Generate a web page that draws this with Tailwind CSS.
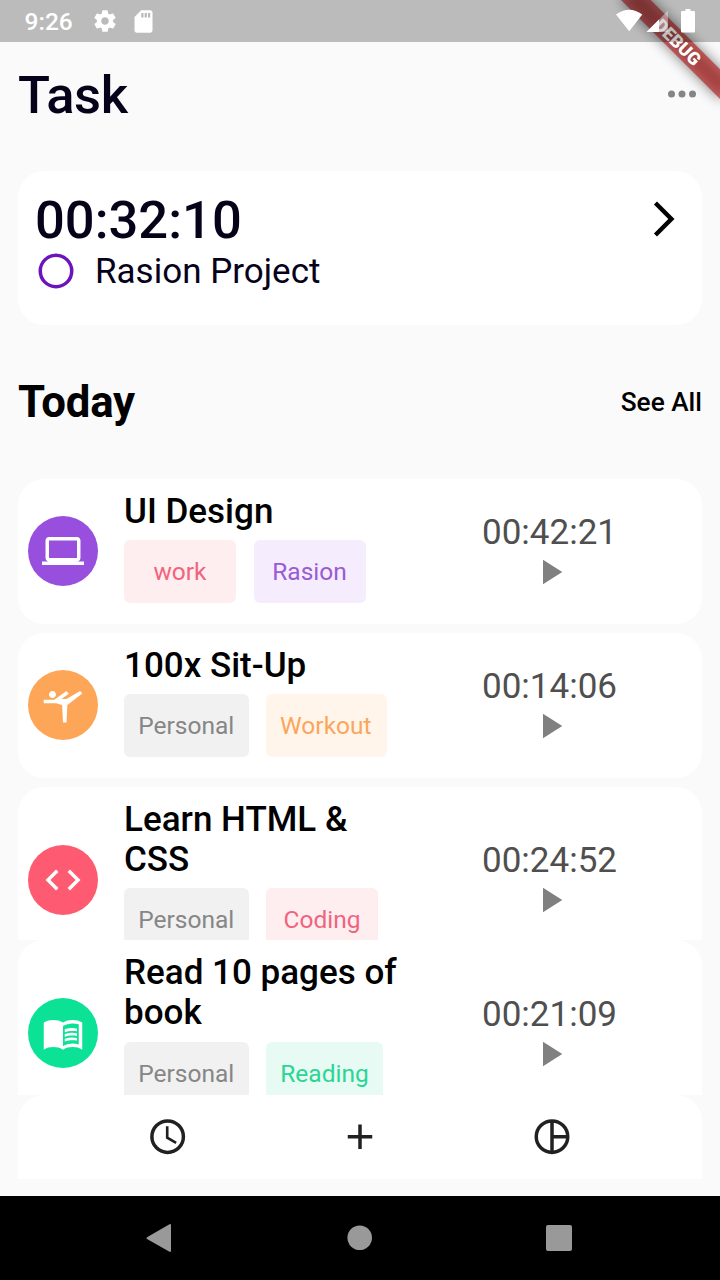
<!DOCTYPE html>
<html lang="en">
<head>
<meta charset="utf-8">
<title>Task</title>
<script src="https://cdn.jsdelivr.net/npm/@tailwindcss/browser@4"></script>
</head>
<body class="w-[720px] h-[1280px] overflow-hidden bg-[#fafafa] font-['Roboto',sans-serif] text-black relative">
<div class="flex flex-col h-[1280px]">
  <div class="h-[42px] shrink-0"></div>

  <main class="h-[1154px] shrink-0 px-[18px] flex flex-col">
    <header class="h-[105px] shrink-0 flex items-center justify-between">
      <h1 class="text-[52.5px] leading-[62px] font-medium text-[#06021a] tracking-[-0.4px]">Task</h1>
      <svg class="size-[42px] -mr-[0.5px] mb-px fill-[#858585]" viewBox="0 0 24 24"><circle cx="6" cy="12" r="2"/><circle cx="12" cy="12" r="2"/><circle cx="18" cy="12" r="2"/></svg>
    </header>

    <section class="mt-[24px] h-[154px] shrink-0 rounded-[26px] bg-white pl-[17px] pr-[17px] pt-[18px]">
      <div class="flex items-center justify-between h-[61px]">
        <span class="text-[52.5px] leading-[61px] pt-[2px] font-medium text-[#06021a]">00:32:10</span>
        <svg class="size-[42px] mb-px fill-black" viewBox="0 0 24 24"><path d="M6.23 20.23 8 22 18 12 8 2 6.23 3.77 14.46 12z"/></svg>
      </div>
      <div class="flex items-center h-[42px] gap-[18px]">
        <svg class="size-[42px]" viewBox="0 0 24 24" fill="none" stroke="#6a14ba" stroke-width="2"><circle cx="12" cy="12" r="9"/></svg>
        <span class="text-[35px] leading-[42px] pt-[2px] text-[#06021a]">Rasion Project</span>
      </div>
    </section>

    <div class="h-[154px] shrink-0 flex items-center justify-between pt-[2px]">
      <h2 class="text-[43.75px] font-bold tracking-[-0.2px]">Today</h2>
      <span class="text-[26.25px] font-medium">See All</span>
    </div>

    <div class="h-[154px] shrink-0 overflow-hidden">
      <article class="h-[145px] rounded-[26px] bg-white flex items-center px-[10px]">
        <div class="size-[70px] mb-px rounded-full bg-[#984fdd] flex items-center justify-center shrink-0">
          <svg class="size-[42px] fill-white" viewBox="0 0 24 24"><path d="M20 18c1.1 0 1.99-.9 1.99-2L22 6c0-1.1-.9-2-2-2H4c-1.1 0-2 .9-2 2v10c0 1.1.9 2 2 2H0v2h24v-2h-4zM4 6h16v10H4V6z"/></svg>
        </div>
        <div class="ml-[26px] w-[298px] h-full pt-[13px]">
          <h3 class="text-[35px] leading-[40px] font-medium">UI Design</h3>
          <div class="mt-[8px] flex gap-[17.5px] text-[24.5px]">
            <span class="h-[63px] min-w-[112px] px-[14px] pt-[2px] rounded-[6px] bg-[#ffeef0] text-[#f0647d] flex items-center justify-center">work</span>
            <span class="h-[63px] min-w-[112px] px-[14px] pt-[2px] rounded-[6px] bg-[#f5edfd] text-[#9a5bd5] flex items-center justify-center">Rasion</span>
          </div>
        </div>
        <div class="ml-[60px] flex flex-col items-center">
          <span class="text-[35px] leading-[41px] w-[136px] relative top-[2px] text-[#4f4f4f]">00:42:21</span>
          <svg class="size-[42px] fill-[#808080]" viewBox="0 0 24 24"><path d="M8 5v14l11-7z"/></svg>
        </div>
      </article>
    </div>

    <div class="h-[154px] shrink-0 overflow-hidden">
      <article class="h-[145px] rounded-[26px] bg-white flex items-center px-[10px]">
        <div class="size-[70px] mb-px rounded-full bg-[#fea657] flex items-center justify-center shrink-0">
          <svg class="size-[42px] fill-white" viewBox="0 0 24 24"><path d="M4 6c0-1.1.9-2 2-2s2 .9 2 2-.9 2-2 2-2-.9-2-2zM1 9h6l7-5 1.31 1.52L11.14 8.5H14L21.8 4 23 5.4 14.5 12 14 22h-2l-.5-10L8 11H1V9z"/></svg>
        </div>
        <div class="ml-[26px] w-[298px] h-full pt-[13px]">
          <h3 class="text-[35px] leading-[40px] font-medium">100x Sit-Up</h3>
          <div class="mt-[8px] flex gap-[17.5px] text-[24.5px]">
            <span class="h-[63px] w-[124.5px] px-[14px] pt-[2px] rounded-[6px] bg-[#f1f1f1] text-[#868686] flex items-center justify-center">Personal</span>
            <span class="h-[63px] w-[121px] px-[14px] pt-[2px] rounded-[6px] bg-[#fff5eb] text-[#fba65c] flex items-center">Workout</span>
          </div>
        </div>
        <div class="ml-[60px] flex flex-col items-center">
          <span class="text-[35px] leading-[41px] w-[136px] relative top-[2px] text-[#4f4f4f]">00:14:06</span>
          <svg class="size-[42px] fill-[#808080]" viewBox="0 0 24 24"><path d="M8 5v14l11-7z"/></svg>
        </div>
      </article>
    </div>

    <div class="h-[153px] shrink-0 overflow-hidden">
      <article class="h-[185px] rounded-[26px] bg-white flex items-center px-[10px]">
        <div class="size-[70px] rounded-full bg-[#fe5b72] flex items-center justify-center shrink-0">
          <svg class="size-[42px] fill-white" viewBox="0 0 24 24"><path d="M9.4 16.6 4.8 12l4.6-4.6L8 6l-6 6 6 6 1.4-1.4zm5.2 0 4.6-4.6-4.6-4.6L16 6l6 6-6 6-1.4-1.4z"/></svg>
        </div>
        <div class="ml-[26px] w-[298px] h-full pt-[13px]">
          <h3 class="text-[35px] leading-[40px] font-medium">Learn HTML &amp;<br>CSS</h3>
          <div class="mt-[8px] flex gap-[17.5px] text-[24.5px]">
            <span class="h-[63px] w-[124.5px] px-[14px] pt-[2px] rounded-[6px] bg-[#f1f1f1] text-[#868686] flex items-center justify-center">Personal</span>
            <span class="h-[63px] min-w-[112px] px-[14px] pt-[2px] rounded-[6px] bg-[#ffeef0] text-[#f0647d] flex items-center justify-center">Coding</span>
          </div>
        </div>
        <div class="ml-[60px] flex flex-col items-center">
          <span class="text-[35px] leading-[41px] w-[136px] relative top-[2px] text-[#4f4f4f]">00:24:52</span>
          <svg class="size-[42px] fill-[#808080]" viewBox="0 0 24 24"><path d="M8 5v14l11-7z"/></svg>
        </div>
      </article>
    </div>

    <div class="h-[154.5px] shrink-0 overflow-hidden">
      <article class="h-[186px] rounded-[26px] bg-white flex items-center px-[10px]">
        <div class="size-[70px] rounded-full bg-[#0be295] flex items-center justify-center shrink-0">
          <svg class="size-[42px] fill-white" viewBox="0 0 24 24"><path fill-rule="evenodd" d="M17.5 4.5c-1.95 0-4.05.4-5.5 1.5-1.45-1.1-3.55-1.5-5.5-1.5S2.45 4.9 1 6v15.5C2.45 20.4 4.55 20 6.5 20s4.05.4 5.5 1.5c1.45-1.1 3.55-1.5 5.5-1.5s4.05.4 5.5 1.5V6c-1.45-1.1-3.55-1.5-5.5-1.5zM21 18.5c-1.1-.35-2.3-.5-3.5-.5-1.7 0-4.15.65-5.5 1.5V8c1.35-.85 3.8-1.5 5.5-1.5 1.2 0 2.4.15 3.5.5v11.5z"/><path d="M13 9.900v1.700c1.300-.600 2.800-.800 4.500-.800.900 0 1.770.090 2.500.240V9.500A13 13 0 0 0 13 9.900zM13 12.600v1.660c1.300-.540 2.800-.830 4.500-.830.900 0 1.770.090 2.500.240v-1.520a13 13 0 0 0-7 .450zM13 15.250v1.660c1.300-.540 2.800-.830 4.500-.830.900 0 1.770.090 2.500.240v-1.520a13 13 0 0 0-7 .450z"/></svg>
        </div>
        <div class="ml-[26px] w-[298px] h-full pt-[13px]">
          <h3 class="text-[35px] leading-[40px] font-medium">Read 10 pages of<br>book</h3>
          <div class="mt-[9px] flex gap-[17.5px] text-[24.5px]">
            <span class="h-[63px] w-[124.5px] px-[14px] pt-[2px] rounded-[6px] bg-[#f1f1f1] text-[#868686] flex items-center justify-center">Personal</span>
            <span class="h-[63px] w-[117px] px-[14px] pt-[2px] rounded-[6px] bg-[#e7fbf4] text-[#2bd693] flex items-center justify-center">Reading</span>
          </div>
        </div>
        <div class="ml-[60px] flex flex-col items-center">
          <span class="text-[35px] leading-[41px] w-[136px] relative top-[2px] text-[#4f4f4f]">00:21:09</span>
          <svg class="size-[42px] fill-[#808080]" viewBox="0 0 24 24"><path d="M8 5v14l11-7z"/></svg>
        </div>
      </article>
    </div>

    <nav class="h-[84px] shrink-0 rounded-t-[26px] bg-white flex justify-center gap-[150px] items-center" aria-label="Main">
      <svg class="size-[42px]" viewBox="0.2 0.2 24 24" fill="none" stroke="#212121"><circle cx="12" cy="12" r="9" stroke-width="2"/><path stroke-width="1.500" d="M11.750 6v6.600l5.100 3"/></svg>
      <svg class="size-[42px] fill-[#212121]" viewBox="0 0.2 24 24"><path d="M19 13h-6v6h-2v-6H5v-2h6V5h2v6h6v2z"/></svg>
      <svg class="size-[42px]" viewBox="0 0.2 24 24" fill="none" stroke="#212121" stroke-width="2"><circle cx="12" cy="12" r="9"/><path d="M12 3v18M12 12h9"/></svg>
    </nav>
  </main>

  <footer class="h-[84px] shrink-0 bg-black flex items-center">
    <svg class="w-[720px] h-[84px] fill-[#999]" viewBox="0 0 720 84"><path d="M147 41.200 169.500 28.200q1.500-.500 1.500 1v25.600q0 1.500-1.500 1L147 43q-1.200-.900 0-1.800z"/><circle cx="359.700" cy="41.700" r="12.300"/><rect x="546" y="29" width="26" height="26" rx="2"/></svg>
  </footer>
</div>

<!-- Debug ribbon across the top right corner, with its soft shadow underneath -->
<div class="absolute top-0 right-0 size-[140px] overflow-hidden">
  <div class="absolute left-[70px] top-[49px] w-[140px] h-[21px] origin-[70px_-49px] rotate-45 bg-black/50 blur-[6.500px]"></div>
  <div class="absolute left-[70px] top-[49px] w-[140px] h-[21px] origin-[70px_-49px] rotate-45 bg-[#b71c1c]/63 flex items-center justify-center text-white text-[17.850px] leading-[21px] font-black">DEBUG</div>
</div>

<!-- Translucent system status bar -->
<div class="absolute top-0 left-0 w-[720px] h-[42px] bg-black/25 flex items-center">
  <span class="pl-[24.500px] w-[91px] text-[24.500px] font-medium text-white leading-[42px] pt-[2px]">9:26</span>
  <svg class="ml-[0.500px] size-[26px] fill-white" viewBox="0 0 24 24"><path d="M19.430 12.980c.040-.320.070-.640.070-.980s-.030-.660-.070-.980l2.110-1.650c.190-.150.240-.420.120-.640l-2-3.460c-.120-.220-.390-.300-.610-.220l-2.490 1c-.520-.400-1.080-.730-1.690-.980l-.380-2.650A.488.488 0 0 0 14 2h-4c-.250 0-.460.180-.490.420l-.380 2.650c-.610.250-1.170.590-1.690.980l-2.490-1c-.230-.090-.490 0-.610.220l-2 3.460c-.130.220-.070.490.120.640l2.110 1.650c-.040.320-.070.650-.070.980s.030.660.070.980l-2.110 1.650c-.190.150-.240.420-.120.640l2 3.460c.120.220.390.300.610.220l2.490-1c.520.400 1.080.730 1.690.980l.380 2.650c.030.240.240.420.490.420h4c.250 0 .460-.180.490-.420l.380-2.650c.610-.250 1.170-.590 1.690-.980l2.490 1c.230.090.490 0 .610-.220l2-3.460c.120-.220.070-.490-.120-.640l-2.110-1.650zM12 15.500c-1.930 0-3.500-1.570-3.500-3.500s1.570-3.500 3.500-3.500 3.500 1.570 3.500 3.500-1.570 3.500-3.500 3.500z"/></svg>
  <svg class="ml-[12.500px] size-[27px] fill-white" viewBox="0 0 24 24"><path d="M18 2h-8L4 8v12c0 1.100.900 2 2 2h12c1.100 0 2-.900 2-2V4c0-1.100-.900-2-2-2z"/><path class="fill-[#bbb]" d="M10 4.500h2v4h-2zM13 4.500h2v4h-2zM16 4.500h2v4h-2z"/></svg>
  <svg class="w-[90px] h-[42px] ml-auto mr-[20px] fill-white" viewBox="610 0 90 42"><path d="M616 14.500Q629 5 642.300 14.500L629.200 31.300z"/><path fill-opacity=".4" d="M668 10.500V32h-21.500z"/><path d="M659 19.500V32h-12.500z"/><path d="M685.500 9h5v2h3.300q1.200 0 1.200 1.200v19q0 1.300-1.200 1.300h-11.600q-1.200 0-1.200-1.300v-19q0-1.200 1.200-1.200h3.300z"/></svg>
</div>
</body>
</html>
